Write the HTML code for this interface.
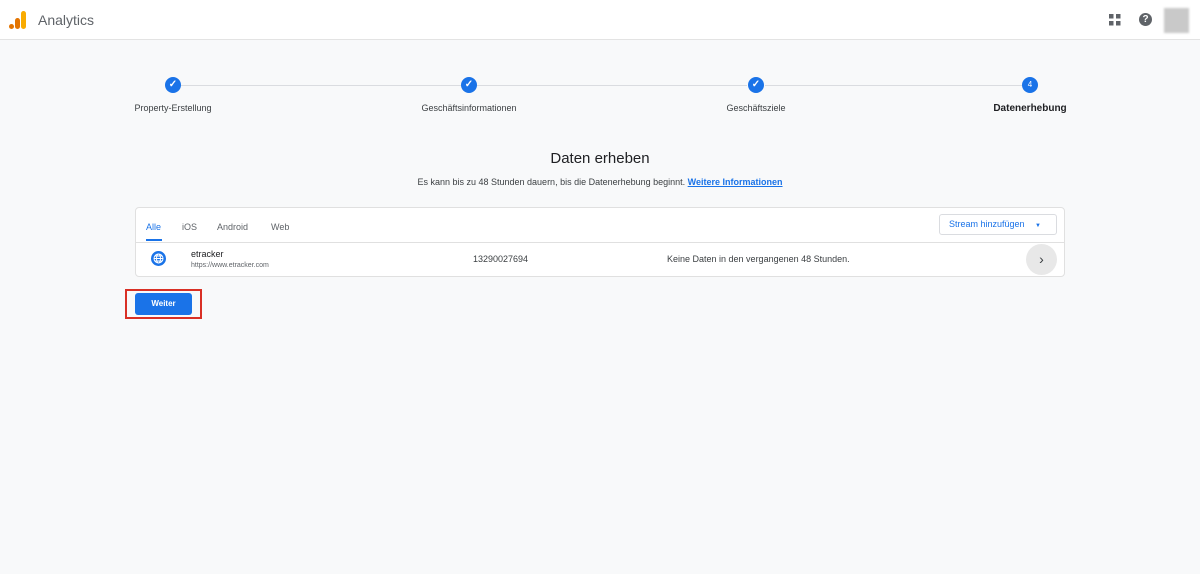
<!DOCTYPE html>
<html><head><meta charset="utf-8"><style>
*{box-sizing:border-box;margin:0;padding:0}
body{width:1200px;height:574px;background:#f8f9fa;font-family:"Liberation Sans",sans-serif;position:relative;overflow:hidden;color:#3c4043}
.hdr{position:absolute;left:0;top:0;width:1200px;height:40px;background:#fff;border-bottom:1px solid #e3e3e3}
.abs{position:absolute}
.step{position:absolute;top:77px;width:16px;height:16px;border-radius:50%;background:#1a73e8;color:#fff;font-size:8px;text-align:center;line-height:16px}
.ck{font-size:10px;font-weight:bold}
.lbl{position:absolute;top:103px;font-size:9px;color:#3c4043;transform:translateX(-50%);white-space:nowrap}
.line{position:absolute;top:85px;height:1px;background:#dadce0}
</style></head><body>
<div class="hdr">
<svg class="abs" style="left:9px;top:10px" width="18" height="20"><rect x="12" y="1" width="5" height="18" rx="2.5" fill="#f9ab00"/><rect x="6" y="8" width="5" height="11" rx="2.5" fill="#e37400"/><circle cx="2.5" cy="16.5" r="2.5" fill="#e37400"/></svg>
<div class="abs" style="left:38px;top:12px;font-size:14px;color:#5f6368">Analytics</div>
<svg class="abs" style="left:1109px;top:14px" width="12" height="12" fill="#5f6368"><rect x="0" y="0" width="4.5" height="4.5"/><rect x="7" y="0" width="4.5" height="4.5"/><rect x="0" y="7" width="4.5" height="4.5"/><rect x="7" y="7" width="4.5" height="4.5"/></svg>
<div class="abs" style="left:1139px;top:13px;width:13px;height:13px;border-radius:50%;background:#5f6368;color:#fff;font-size:10px;font-weight:bold;text-align:center;line-height:13px">?</div>
<div class="abs" style="left:1164px;top:8px;width:25px;height:25px;background:#c9c9c9;filter:blur(1px)"></div>
</div>
<div class="line" style="left:181px;width:280px"></div>
<div class="line" style="left:477px;width:270px"></div>
<div class="line" style="left:765px;width:258px"></div>
<div class="step ck" style="left:165px">✓</div>
<div class="step ck" style="left:461px">✓</div>
<div class="step ck" style="left:748px">✓</div>
<div class="step" style="left:1022px">4</div>
<div class="lbl" style="left:173px">Property-Erstellung</div>
<div class="lbl" style="left:469px">Geschäftsinformationen</div>
<div class="lbl" style="left:756px">Geschäftsziele</div>
<div class="lbl" style="left:1030px;font-weight:bold;font-size:10px;color:#202124">Datenerhebung</div>
<div class="abs" style="left:0;width:1200px;top:150px;text-align:center;font-size:15px;color:#202124">Daten erheben</div>
<div class="abs" style="left:0;width:1200px;top:177px;text-align:center;font-size:9px;color:#3c4043">Es kann bis zu 48 Stunden dauern, bis die Datenerhebung beginnt. <span style="color:#1a73e8;text-decoration:underline;font-weight:bold">Weitere Informationen</span></div>
<div class="abs" style="left:135px;top:207px;width:930px;height:70px;background:#fff;border:1px solid #e0e0e0;border-radius:4px">
 <div class="abs" style="left:0;top:34px;width:928px;height:1px;background:#e0e0e0"></div>
 <div class="abs" style="left:10px;top:14px;font-size:9px;color:#1a73e8">Alle</div>
 <div class="abs" style="left:10px;top:31px;width:16px;height:2px;background:#1a73e8"></div>
 <div class="abs" style="left:46px;top:14px;font-size:9px;color:#5f6368">iOS</div>
 <div class="abs" style="left:81px;top:14px;font-size:9px;color:#5f6368">Android</div>
 <div class="abs" style="left:135px;top:14px;font-size:9px;color:#5f6368">Web</div>
 <div class="abs" style="left:803px;top:6px;width:118px;height:21px;border:1px solid #dadce0;border-radius:3px;font-size:9px;color:#1a73e8;line-height:19px;padding-left:9px">Stream hinzufügen <span style="font-size:6px;margin-left:8px">▼</span></div>
 <svg class="abs" style="left:15px;top:43px" width="15" height="15"><circle cx="7.5" cy="7.5" r="7.5" fill="#1a73e8"/><g fill="none" stroke="#fff" stroke-width="1"><circle cx="7.5" cy="7.5" r="4.5"/><ellipse cx="7.5" cy="7.5" rx="2" ry="4.5"/><path d="M3 7.5h9M4 5h7M4 10h7"/></g></svg>
 <div class="abs" style="left:55px;top:41px;font-size:9px;color:#202124">etracker</div>
 <div class="abs" style="left:55px;top:54px;font-size:7px;color:#5f6368">https://www.etracker.com</div>
 <div class="abs" style="left:337px;top:46px;font-size:9px;color:#3c4043">13290027694</div>
 <div class="abs" style="left:531px;top:46px;font-size:9px;color:#3c4043">Keine Daten in den vergangenen 48 Stunden.</div>
 <div class="abs" style="left:890px;top:36px;width:31px;height:31px;border-radius:50%;background:#e8e8e8;text-align:center;line-height:30px;font-size:14px;color:#3c4043">›</div>
</div>
<div class="abs" style="left:125px;top:289px;width:77px;height:30px;border:2px solid #d93025"></div>
<div class="abs" style="left:135px;top:293px;width:57px;height:22px;background:#1a73e8;border-radius:3px;color:#fff;font-size:8px;font-weight:bold;text-align:center;line-height:22px">Weiter</div>
</body></html>
